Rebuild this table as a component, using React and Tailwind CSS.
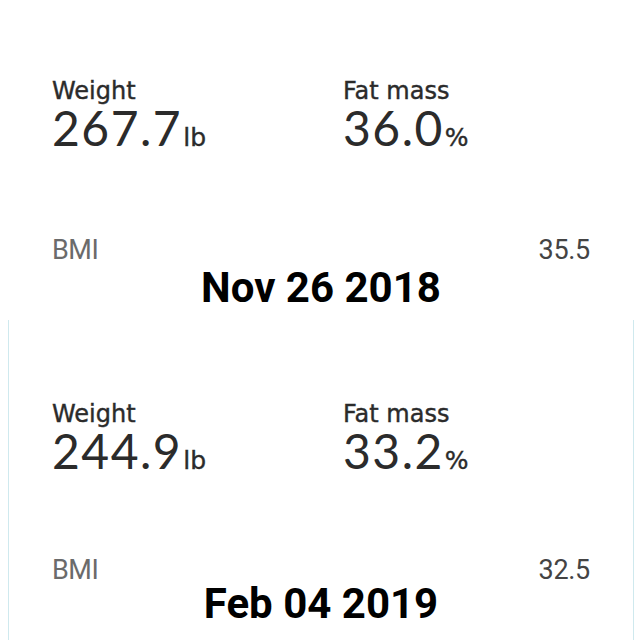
export default function App() {
  const panels = [
    { weight: '267.7', fat: '36.0', bmi: '35.5', date: 'Nov 26 2018', framed: false },
    { weight: '244.9', fat: '33.2', bmi: '32.5', date: 'Feb 04 2019', framed: true },
  ];

  return (
    <div className="w-[640px] h-[640px] bg-white overflow-hidden">
      {panels.map((p, i) => (
        <div
          key={i}
          className={
            p.framed
              ? 'h-[320px] ml-[8px] mr-[6px] border-x border-[#cfe9ee] pt-[82px] pl-[43px] pr-[43px]'
              : 'h-[320px] pt-[79px] pl-[52px] pr-[50px]'
          }
        >
          <div className="flex">
            <div className="w-[291px] shrink-0">
              <Metric label="Weight" value={p.weight} unit="lb" />
            </div>
            <Metric label="Fat mass" value={p.fat} unit="%" />
          </div>
          <div
            className={
              'flex justify-between font-["Roboto",sans-serif] text-[27px] leading-[28px] ' +
              (p.framed ? 'mt-[76px]' : 'mt-[79px]')
            }
          >
            <span className="text-[#6b6b6b] tracking-[-0.5px]">BMI</span>
            <span className="text-[#444] tracking-[-0.3px]">{p.bmi}</span>
          </div>
          <div
            className={
              'text-center font-["Roboto",sans-serif] font-bold text-[42px] leading-[44px] text-black ' +
              (p.framed ? '-mt-[2px]' : 'mt-[2px]')
            }
          >
            {p.date}
          </div>
        </div>
      ))}
    </div>
  );
}

function Metric({ label, value, unit }) {
  return (
    <div className="text-[#2b2b2b]">
      <div className="font-['DejaVu_Sans',sans-serif] text-[24px] leading-[24px] [-webkit-text-stroke:0.4px_#2b2b2b]">
        {label}
      </div>
      <div className="mt-[3px] flex items-baseline">
        <span className="font-['Lato',sans-serif] text-[48px] leading-[44px] tracking-[1.5px]">{value}</span>
        <span className="ml-[1px] font-['DejaVu_Sans',sans-serif] text-[25px] [-webkit-text-stroke:0.4px_#2b2b2b]">
          {unit}
        </span>
      </div>
    </div>
  );
}
